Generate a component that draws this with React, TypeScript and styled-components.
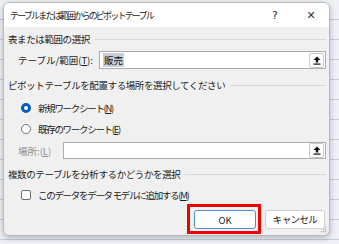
import React from 'react';
import styled, { createGlobalStyle } from 'styled-components';

const GlobalStyle = createGlobalStyle`
  html, body {
    margin: 0;
    padding: 0;
    width: 339px;
    height: 244px;
    overflow: hidden;
    background-color: #eef1f5;
    background-image: repeating-linear-gradient(
      to bottom,
      transparent 0px,
      transparent 19px,
      #c3cedc 19px,
      #c3cedc 20px
    );
    font-family: "Noto Sans CJK JP", "Noto Sans", sans-serif;
    color: #1a1a1a;
  }
`;

const Dialog = styled.div`
  width: 327px;
  height: 234px;
  margin: 2px 0 0 3px;
  background: #f0f0f0;
  border: 1px solid #b9b9b9;
  border-radius: 6px;
  box-shadow: 0 2px 6px rgba(0, 0, 0, 0.25);
  box-sizing: border-box;
  display: flex;
  flex-direction: column;
  overflow: hidden;
  position: relative;
`;

const TitleBar = styled.div`
  height: 24px;
  background: #fff;
  display: flex;
  align-items: center;
  padding-left: 6px;
  font-size: 9px;
`;

const Title = styled.span`
  flex: 1;
  letter-spacing: -1.8px;
`;

const TitleButton = styled.span`
  width: 36px;
  text-align: center;
  font-size: 11px;
  color: #333;
  font-family: "DejaVu Sans", sans-serif;
`;

const Content = styled.div`
  display: flex;
  flex-direction: column;
  padding: 0 3px 0 4px;
`;

const GroupHeader = styled.div<{ $top: number }>`
  display: flex;
  align-items: center;
  height: 14px;
  margin-top: ${({ $top }) => $top}px;
  font-size: 9.5px;
  letter-spacing: -0.4px;
  color: #222;
  gap: 5px;
  &::after {
    content: '';
    flex: 1;
    height: 1px;
    background: #d8d8d8;
  }
`;

const FieldRow = styled.div<{ $top: number; $height: number }>`
  display: flex;
  align-items: center;
  height: ${({ $height }) => $height}px;
  margin-top: ${({ $top }) => $top}px;
`;

const FieldLabel = styled.span<{ $width: number; $muted?: boolean }>`
  width: ${({ $width }) => $width}px;
  padding-left: 10px;
  box-sizing: border-box;
  font-size: 9.5px;
  color: ${({ $muted }) => ($muted ? '#8c8c8c' : '#1a1a1a')};
  u {
    text-decoration-thickness: 1px;
    text-underline-offset: 1px;
  }
`;

const InputBox = styled.div`
  flex: 1;
  align-self: stretch;
  background: #fff;
  border: 1px solid #adadad;
  display: flex;
  align-items: center;
  padding-left: 3px;
  font-size: 9.5px;
`;

const Selected = styled.span`
  background: #c7cfdc;
  color: #111;
  padding: 0 1px;
`;

const Spacer = styled.span`
  flex: 1;
`;

const CollapseButton = styled.span`
  width: 13px;
  height: 13px;
  margin-right: 1px;
  border: 1px solid #c9c9c9;
  border-radius: 2px;
  background: #fdfdfd;
  display: flex;
  align-items: center;
  justify-content: center;
`;

const OptionRow = styled.label<{ $top: number }>`
  display: flex;
  align-items: center;
  height: 16px;
  margin-top: ${({ $top }) => $top}px;
  padding-left: 13px;
  gap: 7px;
  font-size: 9.5px;
  color: #1a1a1a;
  u {
    text-decoration-thickness: 1px;
    text-underline-offset: 1px;
  }
`;

const OptionText = styled.span`
  letter-spacing: -1.3px;
`;

const Radio = styled.span<{ $checked?: boolean }>`
  width: 10px;
  height: 10px;
  border-radius: 50%;
  box-sizing: border-box;
  border: ${({ $checked }) => ($checked ? '3px solid #005fb8' : '1px solid #707070')};
  background: #fff;
`;

const Check = styled.span`
  width: 10px;
  height: 10px;
  border-radius: 2px;
  box-sizing: border-box;
  border: 1px solid #707070;
  background: #fff;
`;

const ButtonRow = styled.div`
  display: flex;
  justify-content: flex-end;
  align-items: center;
  gap: 4px;
  margin-top: 1px;
  padding-right: 1px;
`;

const Highlight = styled.div`
  border: 3px solid #ee0000;
  padding: 3px 2px 2px 4px;
`;

const Button = styled.button<{ $primary?: boolean }>`
  height: 19px;
  width: ${({ $primary }) => ($primary ? '62px' : '60px')};
  background: #fff;
  border: 1px solid ${({ $primary }) => ($primary ? '#4a90d6' : '#cfcfcf')};
  border-radius: 3px;
  font-family: "Noto Sans CJK JP", "Noto Sans", sans-serif;
  font-size: 9.5px;
  letter-spacing: ${({ $primary }) => ($primary ? '0' : '-0.6px')};
  color: #1a1a1a;
  padding: 0;
  display: flex;
  align-items: center;
  justify-content: center;
`;

const Grip = styled.svg`
  position: absolute;
  right: 2px;
  bottom: 2px;
`;

const UploadIcon = () => (
  <svg width="8" height="9" viewBox="0 0 8 9">
    <path d="M4 0.5 L7.5 4 L5.2 4 L5.2 6.5 L2.8 6.5 L2.8 4 L0.5 4 Z" fill="#111" />
    <rect x="0.5" y="7.5" width="7" height="1.2" fill="#111" />
  </svg>
);

const App = () => {
  return (
    <>
      <GlobalStyle />
      <Dialog>
        <TitleBar>
          <Title>テーブルまたは範囲からのピボットテーブル</Title>
          <TitleButton>?</TitleButton>
          <TitleButton>✕</TitleButton>
        </TitleBar>
        <Content>
          <GroupHeader $top={5}>表または範囲の選択</GroupHeader>
          <FieldRow $top={5} $height={18}>
            <FieldLabel $width={91}>
              テーブル/範囲(<u>T</u>):
            </FieldLabel>
            <InputBox>
              <Selected>販売</Selected>
              <Spacer />
              <CollapseButton>
                <UploadIcon />
              </CollapseButton>
            </InputBox>
          </FieldRow>

          <GroupHeader $top={9}>ピボットテーブルを配置する場所を選択してください</GroupHeader>
          <OptionRow $top={8}>
            <Radio $checked />
            <OptionText>
              新規ワークシート(<u>N</u>)
            </OptionText>
          </OptionRow>
          <OptionRow $top={5}>
            <Radio />
            <OptionText>
              既存のワークシート(<u>E</u>)
            </OptionText>
          </OptionRow>
          <FieldRow $top={5} $height={17}>
            <FieldLabel $width={55} $muted>
              場所:(<u>L</u>)
            </FieldLabel>
            <InputBox>
              <Spacer />
              <CollapseButton>
                <UploadIcon />
              </CollapseButton>
            </InputBox>
          </FieldRow>

          <GroupHeader $top={8}>複数のテーブルを分析するかどうかを選択</GroupHeader>
          <OptionRow $top={6}>
            <Check />
            <OptionText>
              このデータをデータ モデルに追加する(<u>M</u>)
            </OptionText>
          </OptionRow>

          <ButtonRow>
            <Highlight>
              <Button $primary>OK</Button>
            </Highlight>
            <Button>キャンセル</Button>
          </ButtonRow>
        </Content>
        <Grip width="7" height="7" viewBox="0 0 7 7">
          <rect x="5" y="1" width="1.2" height="1.2" fill="#aaa" />
          <rect x="3" y="3" width="1.2" height="1.2" fill="#aaa" />
          <rect x="5" y="3" width="1.2" height="1.2" fill="#aaa" />
          <rect x="1" y="5" width="1.2" height="1.2" fill="#aaa" />
          <rect x="3" y="5" width="1.2" height="1.2" fill="#aaa" />
          <rect x="5" y="5" width="1.2" height="1.2" fill="#aaa" />
        </Grip>
      </Dialog>
    </>
  );
};

export default App;
